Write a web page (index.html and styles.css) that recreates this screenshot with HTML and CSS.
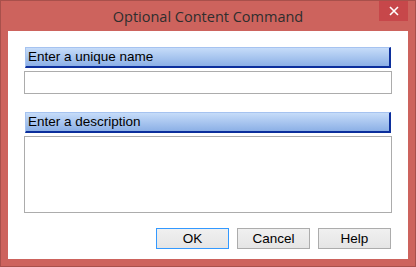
FILE: index.html
```html
<!DOCTYPE html>
<html>
<head>
<meta charset="utf-8">
<link rel="stylesheet" href="styles.css">
</head>
<body>
<div class="window">
  <div class="titlebar">
    <span class="title">Optional Content Command</span>
    <div class="close"><svg width="10" height="10" viewBox="0 0 10 10"><path d="M1 1L9 9M9 1L1 9" stroke="#fff" stroke-width="1.6"/></svg></div>
  </div>
  <div class="client">
    <div class="section-head">Enter a unique name</div>
    <div class="field name-field"></div>
    <div class="section-head second">Enter a description</div>
    <div class="field desc-field"></div>
    <div class="buttons">
      <div class="btn default">OK</div>
      <div class="btn">Cancel</div>
      <div class="btn">Help</div>
    </div>
  </div>
</div>
</body>
</html>
```
FILE: styles.css
```css
html, body {
  margin: 0;
  padding: 0;
  background: #ffffff;
}
.window {
  box-sizing: border-box;
  width: 416px;
  height: 267px;
  border: 1px solid #a8504b;
  background: #cd635d;
  display: flex;
  flex-direction: column;
  padding: 0 7px 7px 7px;
}
.titlebar {
  height: 30px;
  position: relative;
  display: flex;
  align-items: center;
  justify-content: center;
}
.title {
  font-family: "Open Sans", "Noto Sans", sans-serif;
  font-size: 14.5px;
  color: #2e2e2e;
}
.close {
  position: absolute;
  right: 0;
  top: 0;
  width: 29px;
  height: 20px;
  background: #c7474a;
  display: flex;
  align-items: center;
  justify-content: center;
}
.client {
  flex: 1;
  background: #ffffff;
  padding: 16px 16px 0 16px;
  display: flex;
  flex-direction: column;
  font-family: "Liberation Sans", Arial, sans-serif;
  font-size: 13.5px;
  color: #000;
}
.section-head {
  box-sizing: border-box;
  height: 21px;
  margin: 0 1px 3px 1px;
  border-top: 1px solid #a6c3f0;
  border-left: 1px solid #a6c3f0;
  border-right: 2px solid #0c2f9c;
  border-bottom: 2px solid #0c2f9c;
  background: linear-gradient(#c6dcf9, #8cb0e6);
  padding-left: 2px;
  line-height: 18px;
}
.section-head.second {
  margin-top: 18px;
}
.field {
  box-sizing: border-box;
  border: 1px solid #acacac;
  background: #fff;
}
.name-field {
  height: 23px;
}
.desc-field {
  height: 77px;
}
.buttons {
  display: flex;
  justify-content: flex-end;
  gap: 8px;
  margin-top: 15px;
  padding-right: 1px;
}
.btn {
  box-sizing: border-box;
  width: 73px;
  height: 21px;
  border: 1px solid #acacac;
  background: linear-gradient(#f0f0f0, #e5e5e5);
  display: flex;
  align-items: center;
  justify-content: center;
}
.btn.default {
  border-color: #3399ff;
}
```
